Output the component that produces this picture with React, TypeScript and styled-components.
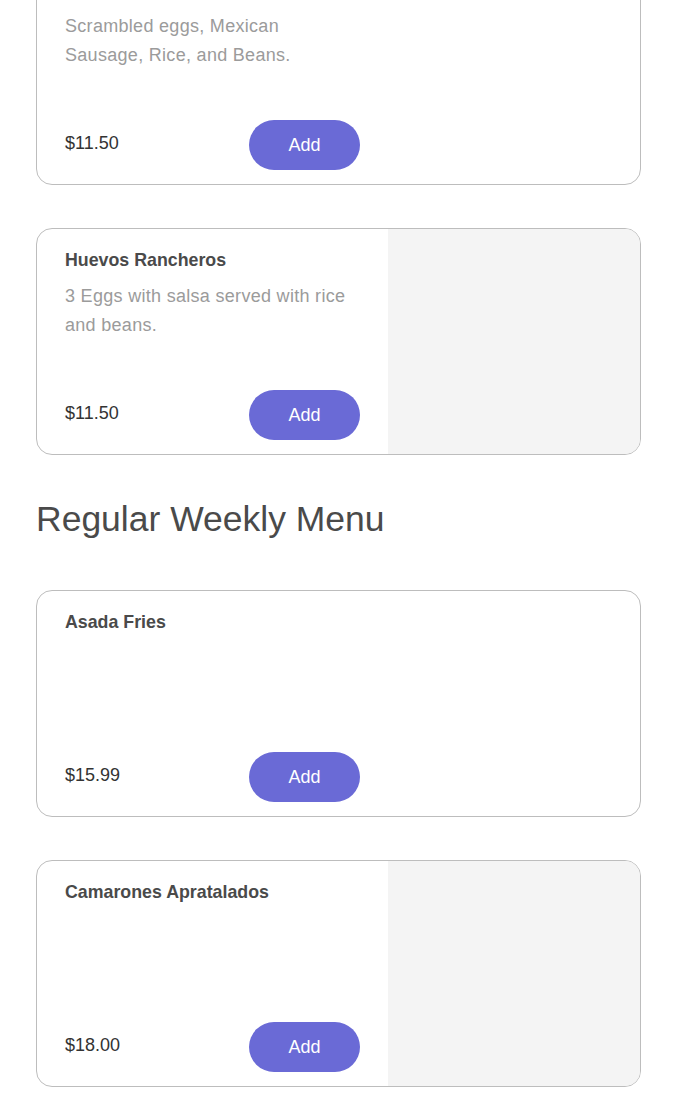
import styled, { createGlobalStyle } from "styled-components";

const GlobalStyle = createGlobalStyle`
  html, body {
    margin: 0;
    padding: 0;
    background: #fff;
  }
  body {
    font-family: "Liberation Sans", Arial, Helvetica, sans-serif;
  }
`;

const Page = styled.div`
  width: 605px;
  margin-left: 36px;
  margin-top: -42px;
  padding-bottom: 40px;
`;

const List = styled.div`
  display: flex;
  flex-direction: column;
  gap: 43px;
`;

const SectionTitle = styled.h2`
  margin: 44px 0 51px;
  font-size: 35.5px;
  line-height: 40px;
  font-weight: 400;
  color: #4a4a4a;
`;

const Card = styled.div`
  display: flex;
  height: 227px;
  box-sizing: border-box;
  border: 1px solid #bdbdbd;
  border-radius: 16px;
  overflow: hidden;
  background: #fff;
`;

const Body = styled.div`
  display: flex;
  flex-direction: column;
  width: 351px;
  flex-shrink: 0;
  box-sizing: border-box;
  padding: 20px 28px 14px;
`;

const Name = styled.div`
  font-size: 17.8px;
  line-height: 22px;
  font-weight: 700;
  color: #4a4a4a;
  margin-bottom: 11px;
`;

const Description = styled.div`
  font-size: 18px;
  line-height: 29px;
  letter-spacing: 0.3px;
  color: #9b9b9b;
`;

const Footer = styled.div`
  margin-top: auto;
  display: flex;
  justify-content: space-between;
  align-items: center;
`;

const Price = styled.div`
  font-size: 18px;
  color: #333;
  padding-bottom: 3px;
`;

const AddButton = styled.button`
  width: 111px;
  height: 50px;
  border: none;
  border-radius: 25px;
  background: #6a6ad6;
  color: #fff;
  font-family: inherit;
  font-size: 18px;
  font-weight: 300;
  padding: 1px 0 0;
  cursor: pointer;
`;

const Photo = styled.div`
  flex: 1;
  background: #f4f4f4;
`;

type Item = {
  name: string;
  description?: string;
  price: string;
  photo: boolean;
};

const breakfast: Item[] = [
  {
    name: "Chorizo con Huevos",
    description: "Scrambled eggs, Mexican Sausage, Rice, and Beans.",
    price: "11.50",
    photo: false,
  },
  {
    name: "Huevos Rancheros",
    description: "3 Eggs with salsa served with rice and beans.",
    price: "11.50",
    photo: true,
  },
];

const weekly: Item[] = [
  { name: "Asada Fries", price: "15.99", photo: false },
  { name: "Camarones Apratalados", price: "18.00", photo: true },
];

const MenuCard = ({ item }: { item: Item }) => (
  <Card>
    <Body>
      <Name>{item.name}</Name>
      {item.description && <Description>{item.description}</Description>}
      <Footer>
        <Price>${item.price}</Price>
        <AddButton>Add</AddButton>
      </Footer>
    </Body>
    {item.photo && <Photo />}
  </Card>
);

const App = () => {
  return (
    <>
      <GlobalStyle />
      <Page>
        <List>
          {breakfast.map((item) => (
            <MenuCard key={item.name} item={item} />
          ))}
        </List>
        <SectionTitle>Regular Weekly Menu</SectionTitle>
        <List>
          {weekly.map((item) => (
            <MenuCard key={item.name} item={item} />
          ))}
        </List>
      </Page>
    </>
  );
};

export default App;
